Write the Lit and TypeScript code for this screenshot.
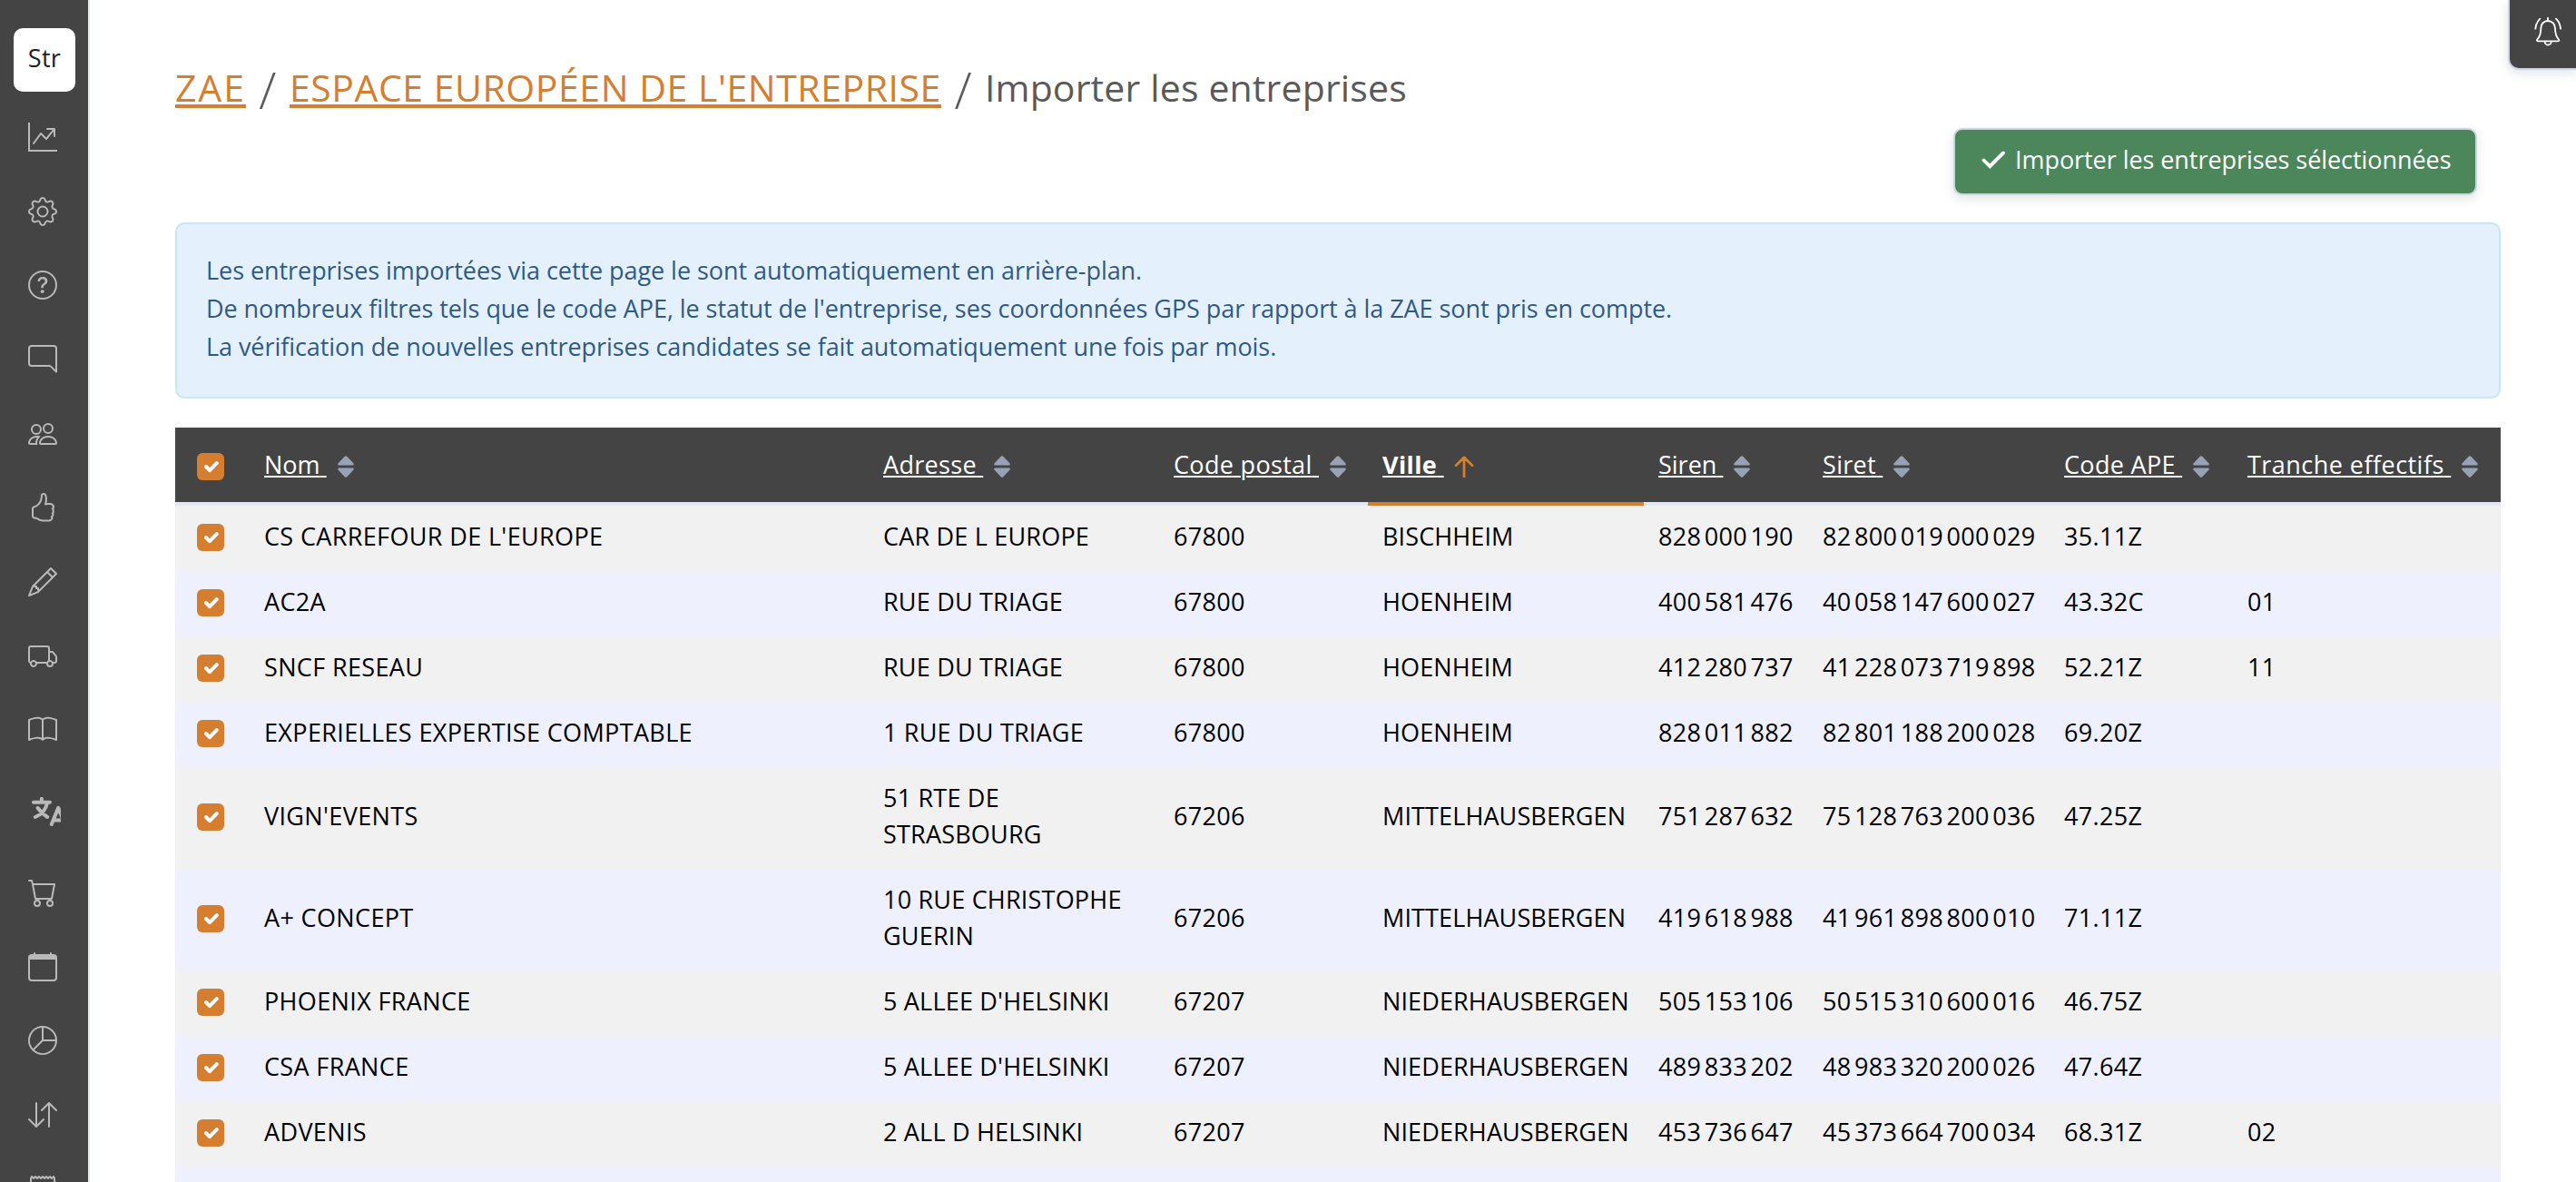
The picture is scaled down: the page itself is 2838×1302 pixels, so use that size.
import { LitElement, html, css, svg, nothing } from "lit";
import { customElement, property } from "lit/decorators.js";
import { classMap } from "lit/directives/class-map.js";

/* ---------- Sidebar icons, all on a 16 x 16 grid ---------- */
const filled = (...paths: string[]) => svg`${paths.map((d) => svg`<path d=${d}></path>`)}`;

const ICONS: Record<string, unknown> = {
  chart: filled(
    "M0 0h1v15h15v1H0zm10 3.5a.5.5 0 0 1 .5-.5h4a.5.5 0 0 1 .5.5v4a.5.5 0 0 1-1 0V4.9l-3.613 4.417a.5.5 0 0 1-.74.037L7.06 6.767l-3.656 5.027a.5.5 0 0 1-.808-.588l4-5.5a.5.5 0 0 1 .758-.06l2.609 2.61L13.445 4H10.5a.5.5 0 0 1-.5-.5"
  ),
  gear: filled(
    "M8 4.754a3.246 3.246 0 1 0 0 6.492 3.246 3.246 0 0 0 0-6.492M5.754 8a2.246 2.246 0 1 1 4.492 0 2.246 2.246 0 0 1-4.492 0",
    "M9.796 1.343c-.527-1.79-3.065-1.79-3.592 0l-.094.319a.873.873 0 0 1-1.255.52l-.292-.16c-1.64-.892-3.433.902-2.54 2.541l.159.292a.873.873 0 0 1-.52 1.255l-.319.094c-1.79.527-1.79 3.065 0 3.592l.319.094a.873.873 0 0 1 .52 1.255l-.16.292c-.892 1.64.901 3.434 2.541 2.54l.292-.159a.873.873 0 0 1 1.255.52l.094.319c.527 1.79 3.065 1.79 3.592 0l.094-.319a.873.873 0 0 1 1.255-.52l.292.16c1.64.893 3.434-.902 2.54-2.541l-.159-.292a.873.873 0 0 1 .52-1.255l.319-.094c1.79-.527 1.79-3.065 0-3.592l-.319-.094a.873.873 0 0 1-.52-1.255l.16-.292c.893-1.64-.902-3.433-2.541-2.54l-.292.159a.873.873 0 0 1-1.255-.52zm-2.633.283c.246-.835 1.428-.835 1.674 0l.094.319a1.873 1.873 0 0 0 2.693 1.115l.291-.16c.764-.415 1.6.42 1.184 1.185l-.159.292a1.873 1.873 0 0 0 1.116 2.692l.318.094c.835.246.835 1.428 0 1.674l-.319.094a1.873 1.873 0 0 0-1.115 2.693l.16.291c.415.764-.42 1.6-1.185 1.184l-.291-.159a1.873 1.873 0 0 0-2.693 1.116l-.094.318c-.246.835-1.428.835-1.674 0l-.094-.319a1.873 1.873 0 0 0-2.692-1.115l-.292.16c-.764.415-1.6-.42-1.184-1.185l.159-.291A1.873 1.873 0 0 0 1.945 8.93l-.319-.094c-.835-.246-.835-1.428 0-1.674l.319-.094A1.873 1.873 0 0 0 3.06 4.377l-.16-.292c-.415-.764.42-1.6 1.185-1.184l.292.159a1.873 1.873 0 0 0 2.692-1.115z"
  ),
  help: filled(
    "M8 15A7 7 0 1 1 8 1a7 7 0 0 1 0 14m0 1A8 8 0 1 0 8 0a8 8 0 0 0 0 16",
    "M5.255 5.786a.237.237 0 0 0 .241.247h.825c.138 0 .248-.113.266-.25.09-.656.54-1.134 1.342-1.134.686 0 1.314.343 1.314 1.168 0 .635-.374.927-.965 1.371-.673.489-1.206 1.06-1.168 1.987l.003.217a.25.25 0 0 0 .25.246h.811a.25.25 0 0 0 .25-.25v-.105c0-.718.273-.927 1.01-1.486.609-.463 1.244-.977 1.244-2.056 0-1.511-1.276-2.241-2.673-2.241-1.267 0-2.655.59-2.75 2.286m1.557 5.763c0 .533.425.927 1.01.927.609 0 1.028-.394 1.028-.927 0-.552-.42-.94-1.029-.94-.584 0-1.009.388-1.009.94"
  ),
  chat: filled(
    "M2 1a1 1 0 0 0-1 1v8a1 1 0 0 0 1 1h9.586a2 2 0 0 1 1.414.586l2 2V2a1 1 0 0 0-1-1zm12-1a2 2 0 0 1 2 2v12.793a.5.5 0 0 1-.854.353l-2.853-2.853a1 1 0 0 0-.707-.293H2a2 2 0 0 1-2-2V2a2 2 0 0 1 2-2z"
  ),
  people: filled(
    "M15 14s1 0 1-1-1-4-5-4-5 3-5 4 1 1 1 1zm-7.978-1L7 12.996c.001-.264.167-1.03.76-1.72C8.312 10.629 9.282 10 11 10c1.717 0 2.687.63 3.24 1.276.593.69.758 1.457.76 1.72l-.008.002-.014.002zM11 7a2 2 0 1 0 0-4 2 2 0 0 0 0 4m3-2a3 3 0 1 1-6 0 3 3 0 0 1 6 0M6.936 9.28a6 6 0 0 0-1.23-.247A7 7 0 0 0 5 9c-4 0-5 3-5 4q0 1 1 1h4.216A2.24 2.24 0 0 1 5 13c0-1.01.377-2.042 1.09-2.904.243-.294.526-.569.846-.816M4.92 10A5.5 5.5 0 0 0 4 13H1c0-.26.164-1.03.76-1.724.545-.636 1.492-1.256 3.16-1.275ZM1.5 5.5a3 3 0 1 1 6 0 3 3 0 0 1-6 0m3-2a2 2 0 1 0 0 4 2 2 0 0 0 0-4"
  ),
  thumb: filled(
    "M8.864.046C7.908-.193 7.02.53 6.956 1.466c-.072 1.051-.23 2.016-.428 2.59-.125.36-.479 1.013-1.04 1.639-.557.623-1.282 1.178-2.131 1.41C2.685 7.288 2 7.87 2 8.72v4.001c0 .845.682 1.464 1.448 1.545 1.07.114 1.564.415 2.068.723l.048.03c.272.165.578.348.97.484.397.136.861.217 1.466.217h3.5c.937 0 1.599-.477 1.934-1.064a1.86 1.86 0 0 0 .254-.912c0-.152-.023-.312-.077-.464.201-.263.38-.578.488-.901.11-.33.172-.762.004-1.149.069-.13.12-.269.159-.403.077-.27.113-.568.113-.857 0-.288-.036-.585-.113-.856a2 2 0 0 0-.138-.362 1.9 1.9 0 0 0 .234-1.734c-.206-.592-.682-1.1-1.2-1.272-.847-.282-1.803-.276-2.516-.211a10 10 0 0 0-.443.05 9.4 9.4 0 0 0-.062-4.509A1.38 1.38 0 0 0 9.125.111zM11.5 14.721H8c-.51 0-.863-.069-1.14-.164-.281-.097-.506-.228-.776-.393l-.04-.024c-.555-.339-1.198-.731-2.49-.868-.333-.036-.554-.29-.554-.55V8.72c0-.254.226-.543.62-.65 1.095-.3 1.977-.996 2.614-1.708.635-.71 1.064-1.475 1.238-1.978.243-.7.407-1.768.482-2.85.025-.362.36-.594.667-.518l.262.066c.16.04.258.143.288.255a8.34 8.34 0 0 1-.145 4.725.5.5 0 0 0 .595.644l.003-.001.014-.003.058-.014a9 9 0 0 1 1.036-.157c.663-.06 1.457-.054 2.11.164.175.058.45.3.57.65.107.308.087.67-.266 1.022l-.353.353.353.354c.043.043.105.141.154.315.048.167.075.37.075.581 0 .212-.027.414-.075.582-.05.174-.111.272-.154.315l-.353.353.353.354c.047.047.109.177.005.488a2.2 2.2 0 0 1-.505.805l-.353.353.353.354c.006.005.041.05.041.17a.9.9 0 0 1-.121.416c-.165.288-.503.56-1.066.56z"
  ),
  pencil: filled(
    "M12.146.146a.5.5 0 0 1 .708 0l3 3a.5.5 0 0 1 0 .708l-10 10a.5.5 0 0 1-.168.11l-5 2a.5.5 0 0 1-.65-.65l2-5a.5.5 0 0 1 .11-.168zM11.207 2.5 13.5 4.793 14.793 3.5 12.5 1.207zm1.586 3L10.5 3.207 4 9.707V10h.5a.5.5 0 0 1 .5.5v.5h.5a.5.5 0 0 1 .5.5v.5h.293zm-9.761 5.175-.106.106-1.528 3.821 3.821-1.528.106-.106A.5.5 0 0 1 5 12.5V12h-.5a.5.5 0 0 1-.5-.5V11h-.5a.5.5 0 0 1-.468-.325"
  ),
  truck: filled(
    "M0 3.5A1.5 1.5 0 0 1 1.5 2h9A1.5 1.5 0 0 1 12 3.5V5h1.02a1.5 1.5 0 0 1 1.17.563l1.481 1.85a1.5 1.5 0 0 1 .329.938V10.5a1.5 1.5 0 0 1-1.5 1.5H14a2 2 0 1 1-4 0H5a2 2 0 1 1-3.998-.085A1.5 1.5 0 0 1 0 10.5zm1.294 7.456A2 2 0 0 1 4.732 11h5.536a2 2 0 0 1 .732-.732V3.5a.5.5 0 0 0-.5-.5h-9a.5.5 0 0 0-.5.5v7a.5.5 0 0 0 .294.456M12 10a2 2 0 0 1 1.732 1h.768a.5.5 0 0 0 .5-.5V8.35a.5.5 0 0 0-.11-.312l-1.48-1.85A.5.5 0 0 0 13.02 6H12zm-9 1a1 1 0 1 0 0 2 1 1 0 0 0 0-2m9 0a1 1 0 1 0 0 2 1 1 0 0 0 0-2"
  ),
  book: filled(
    "M1 2.828c.885-.37 2.154-.769 3.388-.893 1.33-.134 2.458.063 3.112.752v9.746c-.935-.53-2.12-.603-3.213-.493-1.18.12-2.37.461-3.287.811zm7.5-.141c.654-.689 1.782-.886 3.112-.752 1.234.124 2.503.523 3.388.893v9.923c-.918-.35-2.107-.692-3.287-.81-1.094-.111-2.278-.039-3.213.492zM8 1.783C7.015.936 5.587.81 4.287.94c-1.514.153-3.042.672-3.994 1.105A.5.5 0 0 0 0 2.5v11a.5.5 0 0 0 .707.455c.882-.4 2.303-.881 3.68-1.02 1.409-.142 2.59.087 3.223.877a.5.5 0 0 0 .78 0c.633-.79 1.814-1.019 3.222-.877 1.378.139 2.8.62 3.681 1.02A.5.5 0 0 0 16 13.5v-11a.5.5 0 0 0-.293-.455c-.952-.433-2.48-.952-3.994-1.105C10.413.809 8.985.936 8 1.783"
  ),
  translate: svg`<g fill="none" stroke="currentColor" stroke-width="2" stroke-linecap="round" stroke-linejoin="round">
    <path d="M1 2.9H10M5.45.9V2.9M8.5 3.2Q7.4 8.8 1.9 11M3.3 6Q5.4 9 8.6 11M10.9 15L14.6 5.9L18.3 15M12 12.8H17"></path></g>`,
  cart: filled(
    "M0 1.5A.5.5 0 0 1 .5 1H2a.5.5 0 0 1 .485.379L2.89 3H14.5a.5.5 0 0 1 .491.592l-1.5 8A.5.5 0 0 1 13 12H4a.5.5 0 0 1-.491-.408L2.01 3.607 1.61 2H.5a.5.5 0 0 1-.5-.5M3.102 4l1.313 7h8.17l1.313-7zM5 12a2 2 0 1 0 0 4 2 2 0 0 0 0-4m7 0a2 2 0 1 0 0 4 2 2 0 0 0 0-4m-7 1a1 1 0 1 1 0 2 1 1 0 0 1 0-2m7 0a1 1 0 1 1 0 2 1 1 0 0 1 0-2"
  ),
  calendar: filled(
    "M3.5 0a.5.5 0 0 1 .5.5V1h8V.5a.5.5 0 0 1 1 0V1h1a2 2 0 0 1 2 2v11a2 2 0 0 1-2 2H2a2 2 0 0 1-2-2V3a2 2 0 0 1 2-2h1V.5a.5.5 0 0 1 .5-.5M1 4v10a1 1 0 0 0 1 1h12a1 1 0 0 0 1-1V4z"
  ),
  pie: filled(
    "M7.5 1.018a7 7 0 0 0-4.79 11.566L7.5 7.793zm1 0V7.5h6.482A7 7 0 0 0 8.5 1.018M14.982 8.5H8.207l-4.79 4.79A7 7 0 0 0 14.982 8.5M0 8a8 8 0 1 1 16 0A8 8 0 0 1 0 8"
  ),
  arrows: filled(
    "M11.5 15a.5.5 0 0 0 .5-.5V2.707l3.146 3.147a.5.5 0 0 0 .708-.708l-4-4a.5.5 0 0 0-.708 0l-4 4a.5.5 0 1 0 .708.708L11 2.707V14.5a.5.5 0 0 0 .5.5m-7-14a.5.5 0 0 1 .5.5v11.793l3.146-3.147a.5.5 0 0 1 .708.708l-4 4a.5.5 0 0 1-.708 0l-4-4a.5.5 0 0 1 .708-.708L4 13.293V1.5a.5.5 0 0 1 .5-.5"
  ),
  receipt: svg`<path fill="none" stroke="currentColor" stroke-linejoin="round" d="M1.5 16V2l.5-1 1 1 1-1 1 1 1-1 1 1 1-1 1 1 1-1 1 1 1-1 1 1 1-1 .5 1v14"></path>`,
};

const NAV = [
  "chart", "gear", "help", "chat", "people", "thumb", "pencil", "truck",
  "book", "translate", "cart", "calendar", "pie", "arrows", "receipt",
];

const COLUMNS = [
  { label: "Nom", tight: true }, { label: "Adresse" }, { label: "Code postal" },
  { label: "Ville", sorted: true }, { label: "Siren", tight: true }, { label: "Siret" },
  { label: "Code APE" }, { label: "Tranche effectifs", loose: true },
];

type Row = [string, string, string, string, string, string, string, string];

const ROWS: Row[] = [
  ["CS CARREFOUR DE L'EUROPE", "CAR DE L EUROPE", "67800", "BISCHHEIM", "828 000 190", "82 800 019 000 029", "35.11Z", ""],
  ["AC2A", "RUE DU TRIAGE", "67800", "HOENHEIM", "400 581 476", "40 058 147 600 027", "43.32C", "01"],
  ["SNCF RESEAU", "RUE DU TRIAGE", "67800", "HOENHEIM", "412 280 737", "41 228 073 719 898", "52.21Z", "11"],
  ["EXPERIELLES EXPERTISE COMPTABLE", "1 RUE DU TRIAGE", "67800", "HOENHEIM", "828 011 882", "82 801 188 200 028", "69.20Z", ""],
  ["VIGN'EVENTS", "51 RTE DE STRASBOURG", "67206", "MITTELHAUSBERGEN", "751 287 632", "75 128 763 200 036", "47.25Z", ""],
  ["A+ CONCEPT", "10 RUE CHRISTOPHE GUERIN", "67206", "MITTELHAUSBERGEN", "419 618 988", "41 961 898 800 010", "71.11Z", ""],
  ["PHOENIX FRANCE", "5 ALLEE D'HELSINKI", "67207", "NIEDERHAUSBERGEN", "505 153 106", "50 515 310 600 016", "46.75Z", ""],
  ["CSA FRANCE", "5 ALLEE D'HELSINKI", "67207", "NIEDERHAUSBERGEN", "489 833 202", "48 983 320 200 026", "47.64Z", ""],
  ["ADVENIS", "2 ALL D HELSINKI", "67207", "NIEDERHAUSBERGEN", "453 736 647", "45 373 664 700 034", "68.31Z", "02"],
];

@customElement("app-sidebar")
class AppSidebar extends LitElement {
  static styles = css`
    :host {
      display: block;
      box-sizing: border-box;
      width: 99px;
      height: 1302px;
      overflow: hidden;
      background: #444;
      border-right: 2px solid #e2e8f0;
      color: #b9b9b9;
    }
    .logo {
      box-sizing: border-box;
      width: 68px;
      height: 70px;
      margin: 31px 0 0 15px;
      padding-bottom: 5px;
      border-radius: 10px;
      background: #fff;
      color: #212121;
      display: flex;
      align-items: center;
      justify-content: center;
      letter-spacing: 0.3px;
    }
    .nav {
      display: flex;
      flex-direction: column;
      padding-top: 9.2px;
    }
    .item {
      flex: none;
      height: 81.67px;
      padding-left: 31px;
      display: flex;
      align-items: center;
    }
    .item.large {
      height: 97px;
      padding-left: 35px;
    }
    .icon {
      display: block;
      width: 32px;
      height: 32px;
    }
  `;
  render() {
    return html`
      <div class="logo">Str</div>
      <nav class="nav">
        ${NAV.map(
          (name) => html`<a class=${classMap({ item: true, large: name === "translate" })}>
            <svg class="icon" viewBox="0 0 16 16" fill="currentColor" fill-rule="nonzero">${ICONS[name]}</svg>
          </a>`
        )}
      </nav>
    `;
  }
}

@customElement("check-box")
class CheckBox extends LitElement {
  static styles = css`
    :host {
      display: block;
      width: 30px;
      height: 30px;
      border-radius: 6px;
      background: #d67e2f;
    }
    .tick {
      display: block;
      width: 30px;
      height: 30px;
    }
  `;
  render() {
    return html`<svg class="tick" viewBox="0 0 30 30">
      <path d="M10 15l4 4.2 7.8-8" fill="none" stroke="#fff" stroke-width="4" stroke-linecap="round" stroke-linejoin="round"></path>
    </svg>`;
  }
}

@customElement("company-table")
class CompanyTable extends LitElement {
  @property({ attribute: false }) rows: Row[] = [];

  static styles = css`
    :host {
      display: block;
    }
    .line {
      display: grid;
      grid-template-columns: 82px 682px 320px 230px 304px 181px 266px 202px 295px;
    }
    .head {
      height: 86px;
      background: #444;
      color: #fff;
      font-weight: 500;
    }
    .th {
      box-sizing: border-box;
      padding: 0 0 1px 16px;
      border-bottom: 4px solid #e2e8f0;
      display: flex;
      align-items: center;
      white-space: nowrap;
      letter-spacing: 0.32px;
    }
    .th.tight {
      letter-spacing: 0;
    }
    .th.loose {
      letter-spacing: 0.46px;
    }
    .th.sorted {
      border-bottom-color: #d67e2f;
      font-weight: 700;
      letter-spacing: 0.4px;
    }
    .th.box {
      padding: 4px 0 0 24px;
    }
    .label {
      text-decoration: underline;
      text-decoration-thickness: 2px;
      text-underline-offset: 2px;
    }
    .sort {
      flex: none;
      width: 18px;
      height: 24px;
      margin: 5px 0 0 12px;
      fill: #98a2b6;
    }
    .up {
      flex: none;
      width: 22px;
      height: 24px;
      margin: 5px 0 0 11px;
    }
    .body {
      min-height: 72px;
      background: #f1f1f1;
      color: #000;
    }
    .body:nth-child(odd) {
      background: #eef0fe;
    }
    .td {
      padding: 14px 16px 18px;
      line-height: 40px;
      letter-spacing: 0.2px;
      align-self: center;
    }
    .td.box {
      padding: 0 0 2px 24px;
    }
    .td.name {
      letter-spacing: 0.36px;
    }
    .td.place {
      letter-spacing: 0.12px;
    }
    .td.num {
      letter-spacing: 0.33px;
      word-spacing: -3.9px;
      white-space: nowrap;
    }
  `;

  private kind(i: number) {
    return classMap({ td: true, name: i === 0, place: i === 3, num: i === 2 || i > 3 });
  }

  render() {
    return html`
      <div class="line head">
        <div class="th box"><check-box></check-box></div>
        ${COLUMNS.map(
          (c) => html`<div class=${classMap({ th: true, sorted: !!c.sorted, tight: !!c.tight, loose: !!c.loose })}>
            <span class="label">${c.label}&nbsp;</span>
            ${c.sorted
              ? html`<svg class="up" viewBox="0 0 22 24"><path d="M11 23V2M2 10.8l9-9 9 9" fill="none" stroke="#d67e2f" stroke-width="2.8" stroke-linecap="round" stroke-linejoin="round"></path></svg>`
              : html`<svg class="sort" viewBox="0 0 18 24"><path d="M1.6 10.4Q-.6 10.4.5 8.4L7.7 .8Q9-.5 10.3.8L17.5 8.4Q18.6 10.4 16.4 10.4ZM1.6 13.6Q-.6 13.6.5 15.6L7.7 23.2Q9 24.5 10.3 23.2L17.5 15.6Q18.6 13.6 16.4 13.6Z"></path></svg>`}
          </div>`
        )}
      </div>
      ${this.rows.map(
        (r) => html`<div class="line body">
          <div class="td box"><check-box></check-box></div>
          ${r.map((v, i) => html`<div class=${this.kind(i)}>${v || nothing}</div>`)}
        </div>`
      )}
      <div class="line body"></div>
    `;
  }
}

@customElement("app-root")
class AppRoot extends LitElement {
  static styles = css`
    :host {
      display: flex;
      position: relative;
      width: 2838px;
      height: 1302px;
      overflow: hidden;
      background: #fff;
      font-family: "Open Sans", "Noto Sans", sans-serif;
      font-size: 27px;
    }
    .main {
      flex: none;
      width: 2562px;
      padding-left: 94px;
    }
    .crumbs {
      margin: 0;
      padding-top: 66px;
      height: 60px;
      line-height: 60px;
      display: flex;
      color: #5a5a5a;
      font-size: 41px;
      font-weight: 400;
      letter-spacing: 0.15px;
      white-space: nowrap;
    }
    .link {
      color: #d67e2f;
      text-decoration: underline;
      text-decoration-thickness: 4px;
      text-underline-offset: 3px;
      text-decoration-skip-ink: none;
      letter-spacing: 0.54px;
    }
    .link.short {
      letter-spacing: 1.9px;
    }
    .slash {
      width: 48px;
      padding-top: 2px;
      text-align: center;
      font-size: 56px;
      font-weight: 300;
      line-height: 60px;
      box-sizing: border-box;
      letter-spacing: 0;
    }
    .actions {
      display: flex;
      justify-content: flex-end;
      padding: 15px 26px 0 0;
    }
    .button {
      box-sizing: border-box;
      width: 577px;
      height: 74px;
      padding: 0 25px 5px 29px;
      border: 2px solid #cbd5e1;
      border-radius: 10px;
      background: #4b875a;
      box-shadow: 0 4px 12px rgba(71, 85, 105, 0.16);
      color: #fff;
      display: flex;
      align-items: center;
      gap: 10px;
      letter-spacing: -0.06px;
      white-space: nowrap;
    }
    .check {
      flex: none;
      width: 27px;
      height: 20px;
    }
    .alert {
      box-sizing: border-box;
      height: 194px;
      margin: 30px 0 32px;
      padding: 30px 32px 0;
      border: 2px solid #c9e5fb;
      border-radius: 10px;
      background: #e4f1fd;
      color: #2f5a88;
      line-height: 42px;
      letter-spacing: -0.06px;
    }
    .bell {
      position: absolute;
      top: 0;
      right: 0;
      box-sizing: border-box;
      width: 75px;
      height: 77px;
      padding: 18px 0 0 26px;
      border: solid #cbd5e6;
      border-width: 0 0 2px 2px;
      border-bottom-left-radius: 12px;
      background: #444;
      box-shadow: 0 4px 12px rgba(71, 85, 105, 0.16);
    }
    .ring {
      display: block;
      width: 32px;
      height: 33px;
    }
  `;

  render() {
    return html`
      <app-sidebar></app-sidebar>
      <main class="main">
        <h1 class="crumbs">
          <a class="link short">ZAE</a><span class="slash">/</span><a class="link">ESPACE EUROPÉEN DE L'ENTREPRISE</a><span class="slash">/</span><span>Importer les entreprises</span>
        </h1>
        <div class="actions">
          <div class="button">
            <svg class="check" viewBox="0 0 27 20">
              <path d="M2.5 10.5l6.8 6.7L24 2.4" fill="none" stroke="#fff" stroke-width="3.8" stroke-linecap="round" stroke-linejoin="miter"></path>
            </svg>
            <span>Importer les entreprises sélectionnées</span>
          </div>
        </div>
        <div class="alert">
          <div>Les entreprises importées via cette page le sont automatiquement en arrière-plan.</div>
          <div>De nombreux filtres tels que le code APE, le statut de l'entreprise, ses coordonnées GPS par rapport à la ZAE sont pris en compte.</div>
          <div>La vérification de nouvelles entreprises candidates se fait automatiquement une fois par mois.</div>
        </div>
        <company-table .rows=${ROWS}></company-table>
      </main>
      <div class="bell">
        <svg class="ring" viewBox="0 0 96 99" fill="none" stroke="#fff" stroke-width="5.5" stroke-linecap="round" stroke-linejoin="round">
          <path d="M48 5v9M48 15C35 15 25 25 25 39C25 57 21 68 13 76Q10 82 15 82H82Q87 82 84 76C76 68 72 57 72 39C72 25 61 15 48 15ZM38 84a10.5 10.5 0 0 0 21 0M22 8Q8 22 7 41M75 8Q89 22 90 41"></path>
        </svg>
      </div>
    `;
  }
}
